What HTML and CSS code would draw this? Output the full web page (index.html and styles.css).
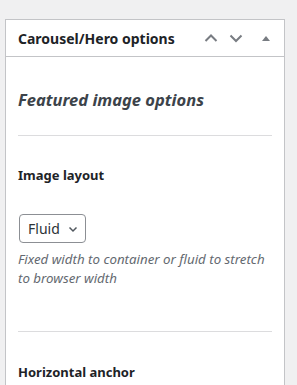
FILE: index.html
```html
<!DOCTYPE html>
<html lang="en">
<head>
    <meta charset="UTF-8">
    <meta name="viewport" content="width=device-width, initial-scale=1.0">
    <title>Carousel/Hero options</title>
    <link rel="stylesheet" href="styles.css">
</head>
<body>
    <div class="postbox">
        <div class="postbox-header">
            <h2>Carousel/Hero options</h2>
            <div class="handle-actions">
                <button class="handle-btn" aria-label="Move up">
                    <svg width="14" height="14" viewBox="0 0 14 14"><path d="M1.5 10 L7 4.5 L12.5 10" fill="none" stroke="currentColor" stroke-width="2"/></svg>
                </button>
                <button class="handle-btn" aria-label="Move down">
                    <svg width="14" height="14" viewBox="0 0 14 14"><path d="M1.5 4.5 L7 10 L12.5 4.5" fill="none" stroke="currentColor" stroke-width="2"/></svg>
                </button>
                <button class="handle-btn toggle" aria-label="Toggle panel">
                    <svg width="10" height="10" viewBox="0 0 10 10"><path d="M1 8 L5 3 L9 8 Z" fill="currentColor"/></svg>
                </button>
            </div>
        </div>
        <div class="inside">
            <h3 class="section-title">Featured image options</h3>
            <hr class="divider">
            <div class="field">
                <label class="field-label" for="layout">Image layout</label>
                <div class="select-wrap">
                    <select id="layout" class="select">
                        <option>Fluid</option>
                        <option>Fixed</option>
                    </select>
                    <svg class="select-arrow" width="10" height="10" viewBox="0 0 10 10"><path d="M1.5 3.5 L5 7 L8.5 3.5" fill="none" stroke="currentColor" stroke-width="1.5"/></svg>
                </div>
                <p class="description">Fixed width to container or fluid to stretch to browser width</p>
            </div>
            <hr class="divider">
            <div class="field field-next">
                <label class="field-label">Horizontal anchor</label>
            </div>
        </div>
    </div>
</body>
</html>
```

FILE: styles.css
```css
html,body{
    margin:0;
    background-color:#f0f0f1;
    font-family:"Noto Sans", "Open Sans", sans-serif;
    color:#1d2327;
}
body{
    padding:19px 0 0 5px;
    height:385px;
    box-sizing:border-box;
    overflow:hidden;
}
.postbox{
    width:280px;
    box-sizing:border-box;
    background-color:#fff;
    border:1px solid #c3c4c7;
    border-bottom:none;
    height:366px;
}
.postbox-header{
    height:36px;
    display:flex;
    align-items:center;
    justify-content:space-between;
    border-bottom:1px solid #c3c4c7;
    padding-left:12px;
}
.postbox-header h2{
    margin:0;
    font-size:14px;
    font-weight:700;
    color:#1d2327;
}
.handle-actions{
    display:flex;
    align-items:center;
    height:100%;
}
.handle-btn{
    width:25px;
    height:36px;
    padding:0;
    border:none;
    background:none;
    color:#787c82;
    display:flex;
    align-items:center;
    justify-content:center;
}
.handle-btn.toggle{
    width:36px;
}
.inside{
    padding:0 12px;
}
.section-title{
    margin:0;
    padding-top:31px;
    padding-bottom:24px;
    font-size:16.5px;
    font-style:italic;
    font-weight:700;
    color:#3c434a;
}
.divider{
    margin:0;
    border:none;
    border-top:1px solid #dcdcde;
}
.field{
    padding-top:30px;
}
.field-next{
    padding-top:31px;
}
.field-label{
    display:block;
    font-size:13px;
    font-weight:700;
    color:#1d2327;
    margin-bottom:30px;
}
.select-wrap{
    position:relative;
    display:inline-block;
    margin-left:1px;
}
.select{
    appearance:none;
    -webkit-appearance:none;
    width:67px;
    height:29px;
    border:1px solid #8c8f94;
    border-radius:4px;
    background:#fff;
    font-family:inherit;
    font-size:14px;
    color:#2c3338;
    padding:0 24px 0 8px;
    margin:0;
}
.select-arrow{
    position:absolute;
    right:8px;
    top:10px;
    color:#50575e;
    pointer-events:none;
}
.description{
    margin:7px 0 43px;
    font-size:13.3px;
    font-style:italic;
    line-height:19px;
    color:#646970;
}
```
